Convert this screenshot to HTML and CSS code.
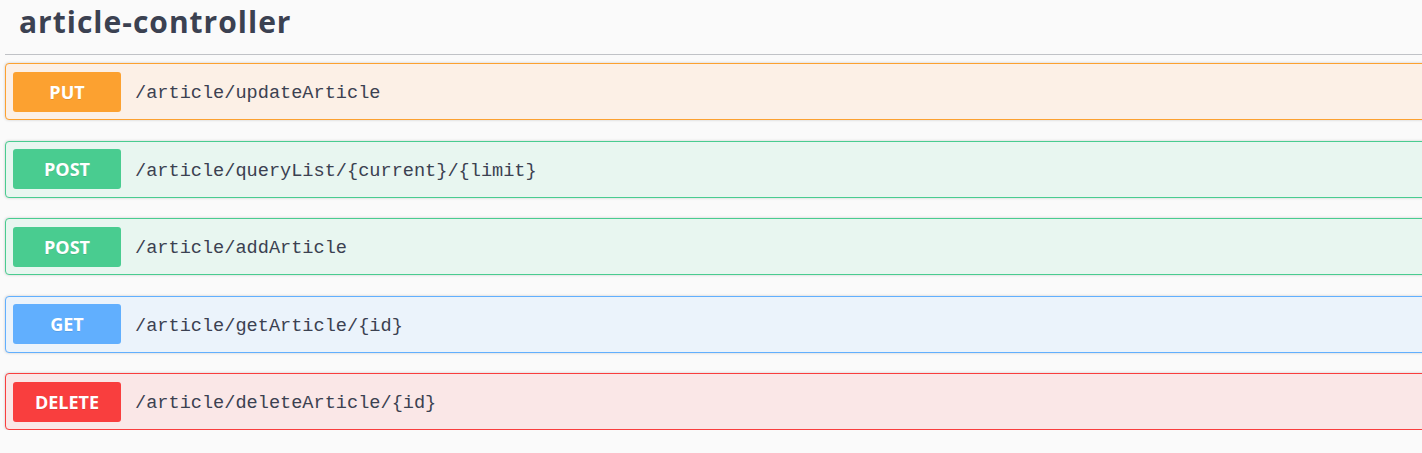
FILE: index.html
```html
<!DOCTYPE html>
<html>
<head>
<meta charset="utf-8">
<link rel="stylesheet" href="styles.css">
</head>
<body>
<div class="page">
  <h4 class="tag">article-controller</h4>
  <div class="ops">
    <div class="op put"><span class="method">PUT</span><span class="path">/article/updateArticle</span></div>
    <div class="op post"><span class="method">POST</span><span class="path">/article/queryList/{current}/{limit}</span></div>
    <div class="op post"><span class="method">POST</span><span class="path">/article/addArticle</span></div>
    <div class="op get"><span class="method">GET</span><span class="path">/article/getArticle/{id}</span></div>
    <div class="op delete"><span class="method">DELETE</span><span class="path">/article/deleteArticle/{id}</span></div>
  </div>
</div>
</body>
</html>
```
FILE: styles.css
```css
html, body {
  margin: 0;
  padding: 0;
  background: #fafafa;
  overflow: hidden;
}
.page {
  width: 1440px;
  padding-left: 5px;
}
.tag {
  margin: 0;
  height: 55px;
  box-sizing: border-box;
  padding: 0 0 0 14px;
  font-family: "Open Sans", "Noto Sans", sans-serif;
  font-weight: 700;
  font-size: 30px;
  letter-spacing: 1px;
  line-height: 44px;
  color: #3b4151;
  border-bottom: 1px solid rgba(59, 65, 81, 0.3);
}
.ops {
  padding-top: 8px;
  display: flex;
  flex-direction: column;
  gap: 20.5px;
}
.op {
  display: flex;
  align-items: center;
  height: 57px;
  box-sizing: border-box;
  padding: 0 7px;
  border: 1px solid;
  border-radius: 4px;
  box-shadow: 0 0 3px rgba(0, 0, 0, 0.19);
}
.method {
  width: 108px;
  height: 40px;
  flex: none;
  border-radius: 3px;
  display: flex;
  align-items: center;
  justify-content: center;
  font-family: "Open Sans", "Noto Sans", sans-serif;
  font-weight: 700;
  font-size: 18px;
  color: #fff;
  text-shadow: 0 1px 0 rgba(0, 0, 0, 0.1);
}
.path {
  margin-left: 14px;
  padding-top: 4px;
  font-family: "Liberation Mono", monospace;
  font-size: 18.6px;
  color: #3b4151;
}
.put { background: #fcf0e6; border-color: #fca130; }
.put .method { background: #fca130; }
.post { background: #e8f6f0; border-color: #49cc90; }
.post .method { background: #49cc90; }
.get { background: #ebf3fb; border-color: #61affe; }
.get .method { background: #61affe; }
.delete { background: #fae7e7; border-color: #f93e3e; }
.delete .method { background: #f93e3e; }
```
